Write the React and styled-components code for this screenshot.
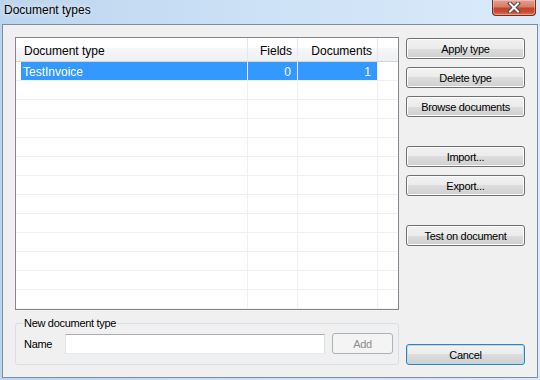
import styled, { createGlobalStyle } from 'styled-components';

const GlobalStyle = createGlobalStyle`
  html, body { margin: 0; padding: 0; }
  body { font-family: "Liberation Sans", Arial, sans-serif; }
`;

const Window = styled.div`
  width: 540px;
  height: 380px;
  box-sizing: border-box;
  display: flex;
  flex-direction: column;
  padding: 0 2px 2px;
  overflow: hidden;
  background: linear-gradient(to right, #bcd5ee 0%, #cfe3f7 55%, #d9eafa 100%);
`;

const TitleBar = styled.div`
  height: 24px;
  display: flex;
  justify-content: space-between;
  align-items: flex-start;
  padding: 0 2px 0 2px;
`;

const Title = styled.div`
  font-size: 12px;
  line-height: 14px;
  padding-top: 3px;
  color: #000;
  text-shadow: 0 0 6px rgba(255, 255, 255, 0.9);
`;

const CloseButton = styled.div`
  width: 44px;
  height: 16px;
  box-sizing: border-box;
  display: flex;
  align-items: center;
  justify-content: center;
  border: 1px solid #7d2a1d;
  border-top: none;
  border-radius: 0 0 4px 4px;
  background: linear-gradient(#e3a193 0%, #d77c68 45%, #c3432c 55%, #c84e32 80%, #de7b5c 100%);
  box-shadow: inset 0 0 0 1px rgba(255, 255, 255, 0.3);
`;

const Client = styled.div`
  flex: 1;
  display: flex;
  gap: 7px;
  padding: 12px;
  border: 1px solid #7c8da0;
  background: #f0f0f0;
`;

const LeftColumn = styled.div`
  width: 384px;
  display: flex;
  flex-direction: column;
  gap: 7px;
`;

const ListView = styled.div`
  flex: 1;
  display: flex;
  flex-direction: column;
  overflow: hidden;
  border: 1px solid #828790;
  background: #fff;
`;

const columns = '232px 50px 80px 1fr';

const HeaderRow = styled.div`
  display: grid;
  grid-template-columns: ${columns};
  height: 24px;
  box-sizing: border-box;
  border-bottom: 1px solid #d5d5d5;
  background: linear-gradient(#ffffff 0%, #ffffff 40%, #f6f7f8 45%, #eff0f2 100%);
`;

const HeaderCell = styled.div`
  padding: 4px 5px 0 ${({ $align }) => ($align === 'right' ? '5px' : '8px')};
  line-height: 19px;
  font-size: 12px;
  color: #000;
  text-align: ${({ $align }) => $align || 'left'};
  border-right: ${({ $last }) => ($last ? 'none' : '1px solid #e3e8ee')};
  white-space: nowrap;
`;

const Body = styled.div`
  flex: 1;
  overflow: hidden;
`;

const Row = styled.div`
  display: grid;
  grid-template-columns: ${columns};
  height: 19px;
  box-sizing: border-box;
  border-bottom: 1px solid #f0f0f0;
`;

const Cell = styled.div`
  padding: 2px 6px 0 ${({ $align }) => ($align === 'right' ? '6px' : '7px')};
  line-height: 16px;
  font-size: 12px;
  white-space: nowrap;
  text-align: ${({ $align }) => $align || 'left'};
  border-right: ${({ $last }) => ($last ? 'none' : '1px solid #f0f0f0')};
  color: ${({ $selected }) => ($selected ? '#fff' : '#000')};
  background: ${({ $selected, $first }) =>
    !$selected ? 'transparent' : $first ? 'linear-gradient(to right, transparent 5px, #3399ff 5px)' : '#3399ff'};
`;

const GroupBox = styled.fieldset`
  margin: 0;
  padding: 4px 4px 10px 8px;
  border: 1px solid #d5dfe5;
  border-radius: 3px;
`;

const GroupLegend = styled.legend`
  padding: 0 1px;
  margin-left: -1px;
  font-size: 11px;
  letter-spacing: -0.3px;
  line-height: 12px;
  color: #000;
`;

const FieldRow = styled.div`
  display: flex;
  align-items: center;
  height: 21px;
`;

const FieldLabel = styled.span`
  width: 41px;
  font-size: 11px;
  letter-spacing: -0.3px;
  color: #000;
`;

const TextInput = styled.input`
  width: 260px;
  height: 20px;
  box-sizing: border-box;
  margin: 0 7px 0 0;
  align-self: flex-end;
  border: 1px solid;
  border-color: #abadb3 #dbdfe6 #e3e9ef #e2e3ea;
  background: #fff;
  outline: none;
`;

const RightColumn = styled.div`
  width: 119px;
  display: flex;
  flex-direction: column;
`;

const Button = styled.button`
  width: ${({ $width }) => $width || '100%'};
  height: 21px;
  flex: none;
  box-sizing: border-box;
  margin: ${({ $gap }) => ($gap === 'auto' ? 'auto' : `${$gap || 0}px`)} 0 0;
  padding: 0;
  font-family: "Liberation Sans", Arial, sans-serif;
  font-size: 11px;
  letter-spacing: -0.3px;
  color: #000;
  border: 1px solid #707070;
  border-radius: 3px;
  background: linear-gradient(#f2f2f2 0%, #ebebeb 50%, #dddddd 50%, #cfcfcf 100%);
  box-shadow: inset 0 0 0 1px #fcfcfc;

  &.default {
    border-color: #3c7fb1;
    box-shadow: inset 0 0 0 1px #a9dff8;
  }

  &:disabled {
    color: #8d8d8d;
    border-color: #adb2b5;
    background: #f4f4f4;
    box-shadow: none;
  }
`;

const rows = [{ name: 'TestInvoice', fields: 0, documents: 1 }];
const emptyRows = Array.from({ length: 12 });

function CloseGlyph() {
  return (
    <svg width="14" height="11" viewBox="0 0 14 11">
      <path d="M3 1.5 L11 9.5 M11 1.5 L3 9.5" stroke="#474747" strokeWidth="4" strokeLinecap="square" />
      <path d="M3 1.5 L11 9.5 M11 1.5 L3 9.5" stroke="#fff" strokeWidth="2" strokeLinecap="square" />
    </svg>
  );
}

export default function App() {
  return (
    <Window>
      <GlobalStyle />
      <TitleBar>
        <Title>Document types</Title>
        <CloseButton>
          <CloseGlyph />
        </CloseButton>
      </TitleBar>
      <Client>
        <LeftColumn>
          <ListView>
            <HeaderRow>
              <HeaderCell>Document type</HeaderCell>
              <HeaderCell $align="right">Fields</HeaderCell>
              <HeaderCell $align="right">Documents</HeaderCell>
              <HeaderCell $last />
            </HeaderRow>
            <Body>
              {rows.map((r) => (
                <Row key={r.name}>
                  <Cell $selected $first>{r.name}</Cell>
                  <Cell $selected $align="right">{r.fields}</Cell>
                  <Cell $selected $align="right">{r.documents}</Cell>
                  <Cell $last />
                </Row>
              ))}
              {emptyRows.map((_, i) => (
                <Row key={i}>
                  <Cell />
                  <Cell />
                  <Cell />
                  <Cell $last />
                </Row>
              ))}
            </Body>
          </ListView>
          <GroupBox>
            <GroupLegend>New document type</GroupLegend>
            <FieldRow>
              <FieldLabel>Name</FieldLabel>
              <TextInput />
              <Button $width="61px" disabled>Add</Button>
            </FieldRow>
          </GroupBox>
        </LeftColumn>
        <RightColumn>
          <Button $gap={1}>Apply type</Button>
          <Button $gap={8}>Delete type</Button>
          <Button $gap={8}>Browse documents</Button>
          <Button $gap={29}>Import...</Button>
          <Button $gap={8}>Export...</Button>
          <Button $gap={29}>Test on document</Button>
          <Button $gap="auto" className="default">Cancel</Button>
        </RightColumn>
      </Client>
    </Window>
  );
}
